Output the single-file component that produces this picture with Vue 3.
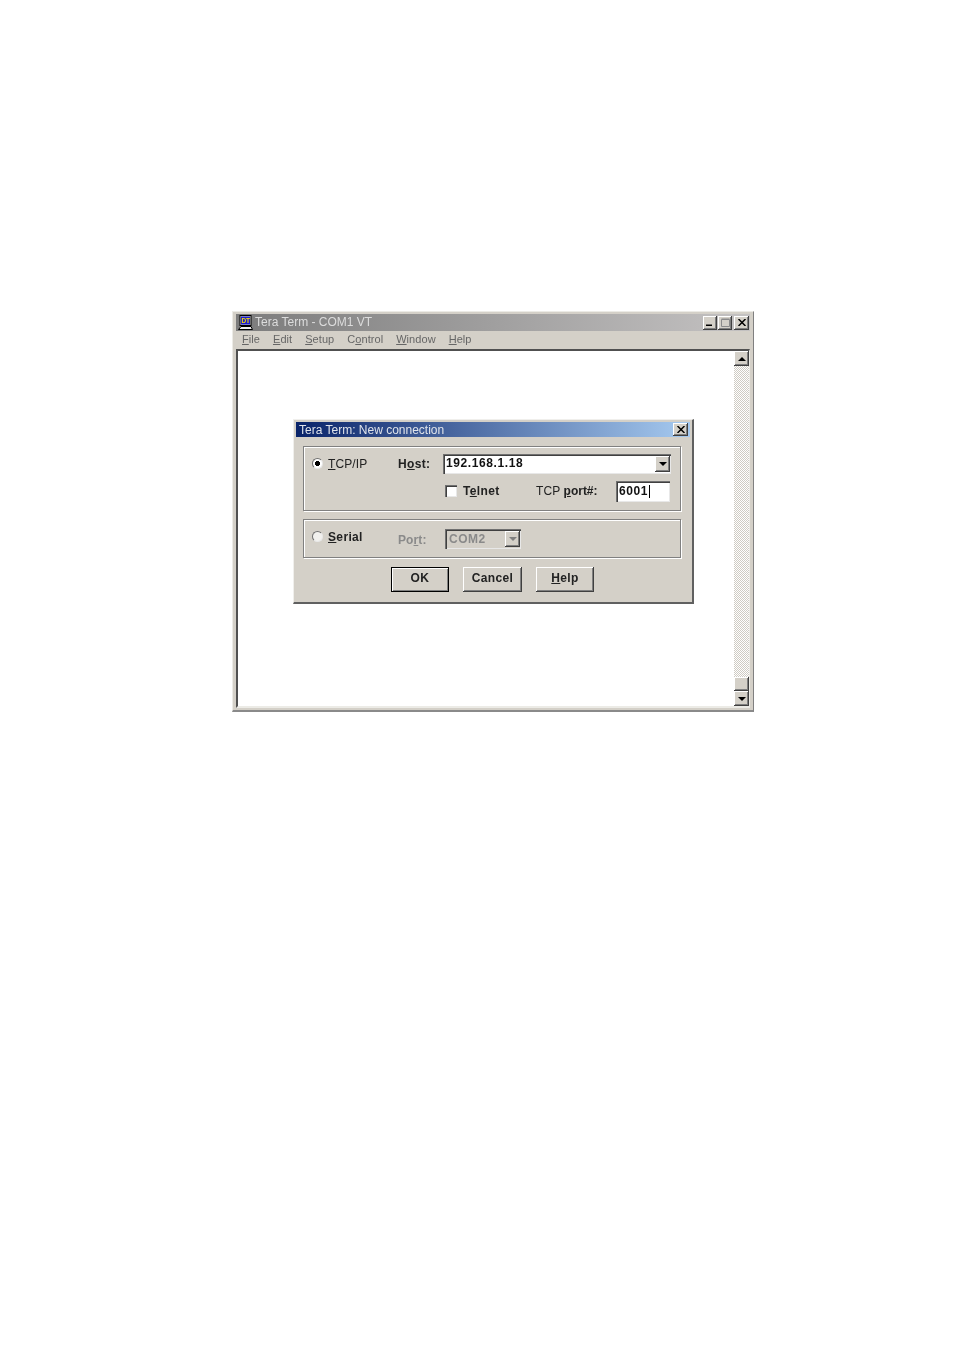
<script setup>
const menus = [
  { key: "F", rest: "ile" },
  { key: "E", rest: "dit" },
  { key: "S", rest: "etup" },
  { pre: "C", key: "o", rest: "ntrol" },
  { key: "W", rest: "indow" },
  { key: "H", rest: "elp" },
];
</script>

<template>
  <div class="page">
    <div class="window">
      <div class="titlebar">
        <svg class="app-icon" width="15" height="16" viewBox="0 0 15 16">
          <rect x="2" y="0.5" width="11" height="10" fill="#d8d8d8" stroke="#000" />
          <rect x="3" y="1.5" width="9" height="8" fill="#1c1ccc" />
          <text x="3.4" y="8" class="icon-text">DT</text>
          <path d="M3 11.5h10l1.5 3H0.5z" fill="#f0f0f0" stroke="#000" />
        </svg>
        <span class="title-text">Tera Term - COM1 VT</span>
        <div class="title-buttons">
          <button class="cap small-cap bevel">
            <svg width="8" height="7" viewBox="0 0 8 7"><path d="M0 5.5h6v1.5H0z" fill="#000" /></svg>
          </button>
          <button class="cap small-cap bevel">
            <svg width="9" height="9" viewBox="0 0 9 9"><path d="M.5 1.5h8v7h-8zM.5 1h8" fill="none" stroke="#8a8a8a" /></svg>
          </button>
          <button class="cap bevel close-cap">
            <svg width="8" height="7" viewBox="0 0 8 7"><path d="M0.5 0l7 7M7.5 0l-7 7" stroke="#000" stroke-width="1.5" /></svg>
          </button>
        </div>
      </div>

      <div class="menubar">
        <span v-for="m in menus" :key="m.key">{{ m.pre }}<u>{{ m.key }}</u>{{ m.rest }}</span>
      </div>

      <div class="client">
        <div class="term"></div>
        <div class="scrollbar">
          <div class="sb-btn bevel"><i class="tri up"></i></div>
          <div class="sb-track"></div>
          <div class="sb-thumb bevel"></div>
          <div class="sb-btn bevel"><i class="tri"></i></div>
        </div>

        <div class="dialog">
          <div class="dlg-title">
            <span>Tera Term: New connection</span>
            <button class="cap bevel dlg-close">
              <svg width="8" height="7" viewBox="0 0 8 7"><path d="M0.5 0l7 7M7.5 0l-7 7" stroke="#000" stroke-width="1.5" /></svg>
            </button>
          </div>

          <div class="dlg-body">
            <div class="group tcp">
              <div class="row">
                <span class="radio checked"></span>
                <span class="lbl w-radio"><u>T</u>CP/IP</span>
                <span class="lbl w-host strong">H<u>o</u>st:</span>
                <div class="combo sunken">
                  <span class="value">192.168.1.18</span>
                  <div class="combo-btn bevel"><i class="tri"></i></div>
                </div>
              </div>
              <div class="row row2">
                <span class="check sunken"></span>
                <span class="lbl w-telnet strong">T<u>e</u>lnet</span>
                <span class="lbl w-port">TCP <u class="strong tight">p</u><span class="strong tight">ort#:</span></span>
                <div class="port sunken"><span class="value">6001</span><i class="caret"></i></div>
              </div>
            </div>

            <div class="group serial">
              <div class="row">
                <span class="radio off"></span>
                <span class="lbl w-radio strong serial-lbl"><u>S</u>erial</span>
                <span class="lbl w-portlbl disabled">Po<u>r</u>t:</span>
                <div class="combo small sunken">
                  <span class="value disabled">COM2</span>
                  <div class="combo-btn bevel"><i class="tri grey"></i></div>
                </div>
              </div>
            </div>

            <div class="actions">
              <button class="btn default">OK</button>
              <button class="btn bevel strong">Cancel</button>
              <button class="btn help bevel strong"><u>H</u>elp</button>
            </div>
          </div>
        </div>
      </div>
    </div>
  </div>
</template>

<style>
html,
body {
  background: #fff;
}
</style>

<style scoped>
.page {
  width: 954px;
  height: 1351px;
  padding: 311px 0 0 232px;
  box-sizing: border-box;
  background: #fff;
  font-family: "Liberation Sans", Arial, sans-serif;
  font-size: 12px;
  color: #222;
}

.window {
  width: 522px;
  height: 401px;
  box-sizing: border-box;
  padding: 2px 3px 2px 3px;
  display: flex;
  flex-direction: column;
  background: #d4d0c8;
  border-top: 1px solid #ecebe6;
  border-left: 1px solid #ecebe6;
  border-right: 1px solid #808080;
  border-bottom: 2px solid #8a8a8a;
  filter: blur(0.3px);
}

.bevel {
  background: #d4d0c8;
  box-shadow: inset -1px -1px 0 #404040, inset 1px 1px 0 #fff, inset -2px -2px 0 #808080;
}

.sunken {
  background: #fff;
  box-shadow: inset 1px 1px 0 #707070, inset 2px 2px 0 #404040, inset -1px -1px 0 #e8e8e8;
}

.titlebar {
  height: 17px;
  flex: none;
  display: flex;
  align-items: center;
  padding: 0 1px 0 2px;
  background: linear-gradient(90deg, #7c7c7c, #c4c2c2);
  color: #dcdcdc;
}

.title-text {
  margin-top: -2px;
}

.app-icon {
  flex: none;
  margin-right: 2px;
}

.icon-text {
  font-family: "Liberation Sans", sans-serif;
  font-size: 6.5px;
  font-weight: 700;
  fill: #f4e000;
}

.title-buttons {
  margin-left: auto;
  display: flex;
}

.cap {
  width: 15px;
  height: 14px;
  border: 0;
  padding: 0;
  display: flex;
  align-items: center;
  justify-content: center;
}

.small-cap {
  width: 14px;
  margin-left: 1px;
}

.close-cap {
  margin-left: 2px;
}

.menubar {
  height: 18px;
  flex: none;
  display: flex;
  align-items: center;
  gap: 13px;
  padding: 0 0 2px 6px;
  box-sizing: border-box;
  font-size: 11px;
  letter-spacing: 0.06px;
  color: #666;
}

.client {
  position: relative;
  height: 359px;
  flex: none;
  display: flex;
  box-sizing: border-box;
  background: #fff;
  border-top: 2px solid #505050;
  border-left: 2px solid #505050;
  border-right: 1px solid #ecebe6;
  border-bottom: 2px solid #ecebe6;
}

.term {
  flex: 1;
}

.scrollbar {
  width: 15px;
  flex: none;
  display: flex;
  flex-direction: column;
}

.sb-btn {
  height: 15px;
  flex: none;
  display: flex;
  align-items: center;
  justify-content: center;
}

.sb-track {
  flex: 1;
  background: repeating-conic-gradient(#fff 0 25%, #cfcbc3 0 50%) 0 0 / 2px 2px;
}

.sb-thumb {
  height: 14px;
  flex: none;
}

.tri {
  display: block;
  width: 0;
  height: 0;
  border-left: 4px solid transparent;
  border-right: 4px solid transparent;
  border-top: 4px solid #000;
}

.tri.up {
  border-top: 0;
  border-bottom: 4px solid #000;
}

.tri.grey {
  border-top-color: #808080;
}

.dialog {
  position: absolute;
  left: 55px;
  top: 68px;
  width: 401px;
  height: 185px;
  box-sizing: border-box;
  padding: 2px;
  background: #d4d0c8;
  border-top: 1px solid #f0efec;
  border-left: 1px solid #f0efec;
  border-right: 2px solid #606060;
  border-bottom: 2px solid #606060;
}

.dlg-title {
  height: 15px;
  display: flex;
  align-items: center;
  padding: 0 2px 0 3px;
  background: linear-gradient(90deg, #0a246a, #a6caf0);
  color: #dfe3ea;
}

.dlg-close {
  margin-left: auto;
  height: 13px;
}

.dlg-body {
  padding: 9px 9px 0 7px;
}

.group {
  box-sizing: border-box;
  padding-left: 8px;
  border: 1px solid #808080;
  box-shadow: 1px 1px 0 #fff, inset 1px 1px 0 #fff;
}

.tcp {
  height: 65px;
  padding-top: 7px;
  margin-bottom: 8px;
}

.serial {
  height: 39px;
  padding-top: 9px;
}

.row {
  display: flex;
  align-items: center;
}

.row2 {
  margin-top: 7px;
  padding-left: 133px;
}

.row2 .lbl,
.row2 .check {
  margin-top: -2px;
}

.lbl {
  flex: none;
  letter-spacing: 0.1px;
}

.strong {
  font-weight: 700;
  letter-spacing: 0.35px;
}

.tight {
  letter-spacing: 0;
}

.disabled {
  color: #8a8a8a;
}

.radio {
  width: 11px;
  height: 11px;
  flex: none;
  box-sizing: border-box;
  margin: -2px 5px 0 0;
  border-radius: 50%;
  background: #fff;
  border: 1px solid #707070;
  border-right-color: #e8e8e8;
  border-bottom-color: #e8e8e8;
}

.radio.checked {
  background: radial-gradient(circle, #000 0 2.3px, #fff 2.8px);
}

.radio.off {
  margin-top: -6px;
  background: #f2f1ee;
}

.w-radio {
  width: 70px;
}

.serial-lbl {
  margin-top: -5px;
}

.w-host {
  width: 45px;
}

.w-portlbl {
  width: 47px;
  margin-top: 2px;
  font-weight: 700;
}

.combo {
  width: 228px;
  height: 20px;
  box-sizing: border-box;
  display: flex;
  align-items: center;
  padding: 0 1px 0 3px;
}

.combo.small {
  width: 76px;
  padding-left: 4px;
  background: #d4d0c8;
}

.value {
  font-weight: 700;
  letter-spacing: 0.6px;
  color: #111;
  margin-top: -2px;
}

.value.disabled {
  color: #8a8a8a;
  letter-spacing: 0.5px;
  margin-top: 0;
}

.combo-btn {
  width: 15px;
  height: 16px;
  margin-left: auto;
  display: flex;
  align-items: center;
  justify-content: center;
}

.check {
  width: 12px;
  height: 12px;
  flex: none;
  margin-right: 6px;
}

.w-telnet {
  width: 73px;
}

.w-port {
  width: 80px;
}

.port {
  width: 54px;
  height: 21px;
  box-sizing: border-box;
  display: flex;
  align-items: center;
  padding-left: 3px;
}

.caret {
  width: 1px;
  height: 13px;
  margin: -1px 0 0 1px;
  background: #000;
}

.actions {
  display: flex;
  gap: 14px;
  padding: 9px 0 0 88px;
}

.btn {
  width: 59px;
  height: 25px;
  border: 0;
  padding: 0 0 3px;
  font: inherit;
  font-weight: 700;
  color: #222;
}

.btn.help {
  width: 58px;
}

.default {
  width: 58px;
  background: #d4d0c8;
  letter-spacing: 0.6px;
  border: 1px solid #000;
  box-shadow: inset 1px 1px 0 #fff, inset -1px -1px 0 #808080;
}
</style>
